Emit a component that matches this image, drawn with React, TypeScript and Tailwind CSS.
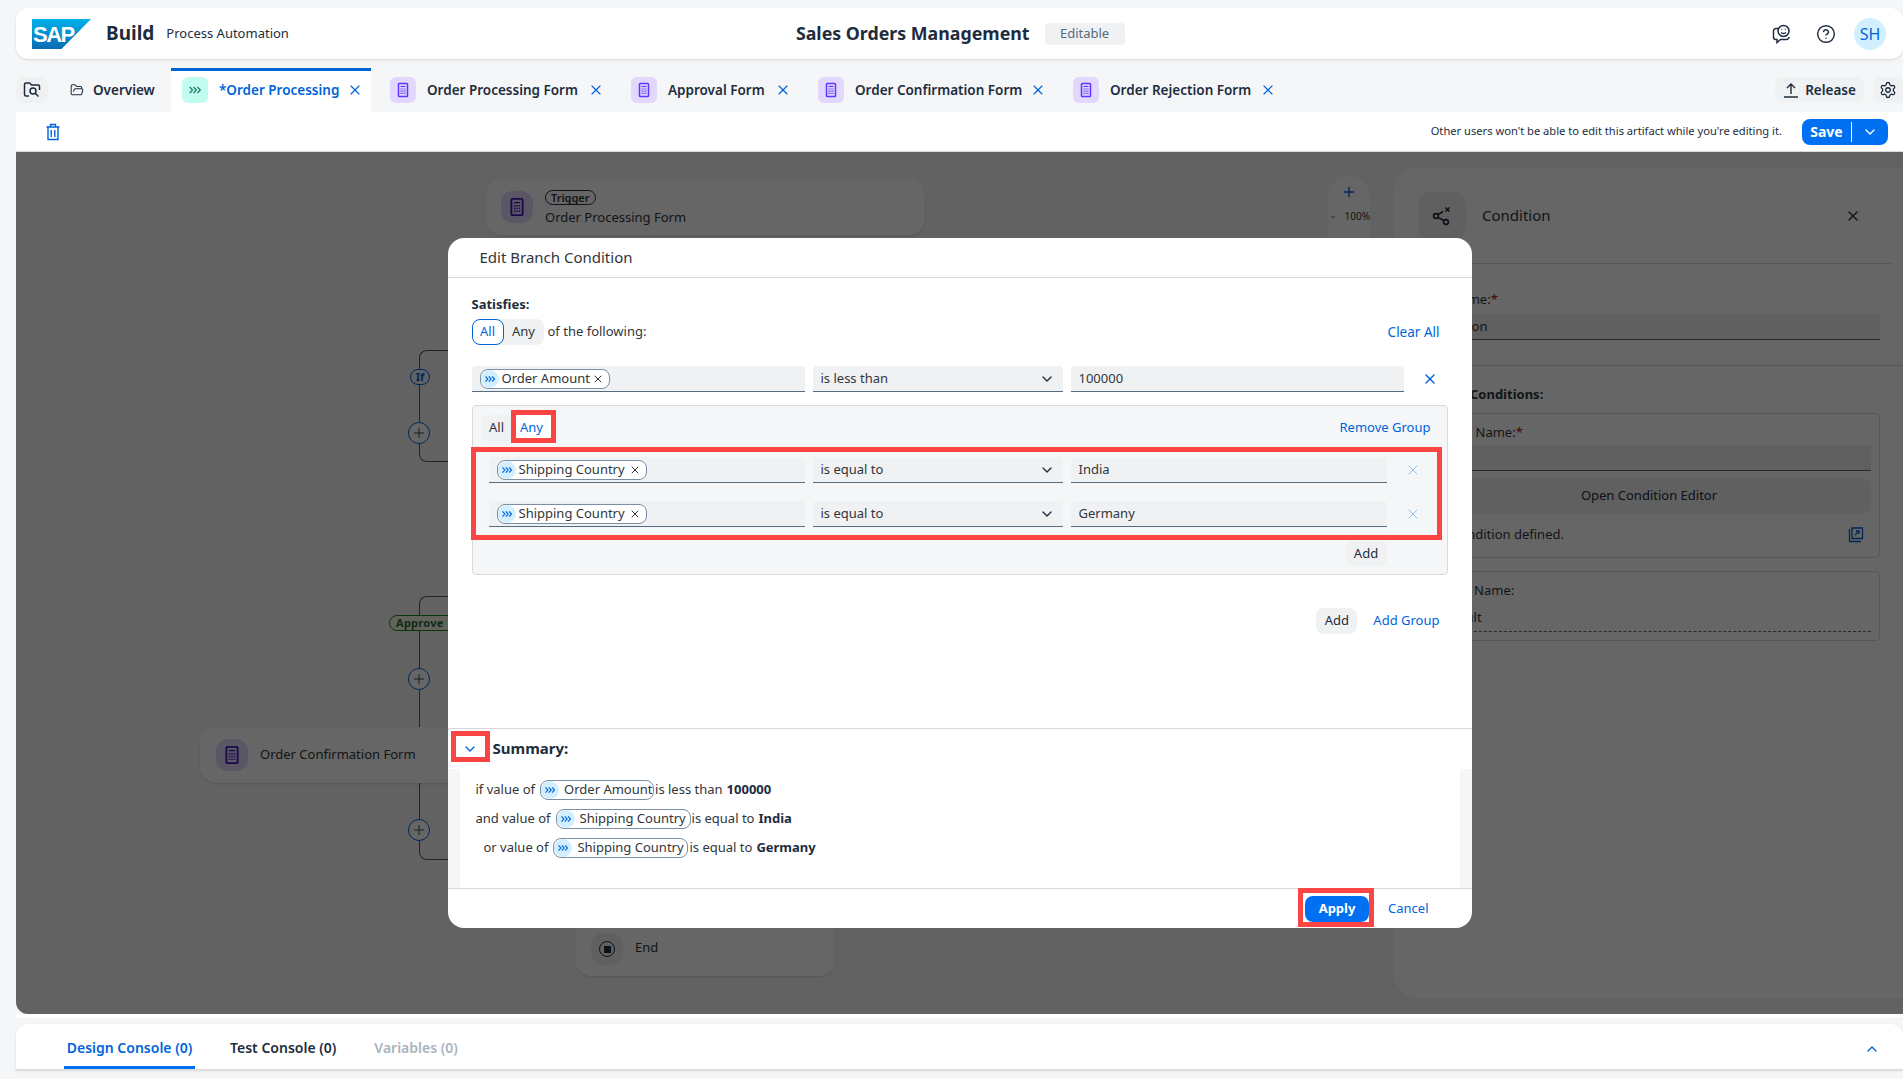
import { ChevronDown, ChevronUp, CircleHelp, FolderOpen, Plus, Settings, X } from "lucide-react";

function Chevrons({ className }: { className?: string }) {
  return (
    <svg viewBox="0 0 16 16" fill="none" stroke="currentColor" strokeWidth="1.5" className={className}>
      <path d="M2 4.5 5.2 8 2 11.5M6.4 4.5 9.6 8 6.4 11.5M10.8 4.5 14 8 10.8 11.5" />
    </svg>
  );
}

function FormIcon({ className }: { className?: string }) {
  return (
    <svg viewBox="0 0 16 16" fill="none" stroke="currentColor" className={className}>
      <rect x="3.5" y="1.5" width="9" height="13" rx="0.8" strokeWidth="1.5" />
      <path d="M5.5 4.5h5" strokeWidth="1.1" />
      <path d="M5.5 7h1.2M7.4 7h1.2M9.3 7h1.2M5.5 9.2h1.2M7.4 9.2h1.2M9.3 9.2h1.2M5.5 11.4h1.2M7.4 11.4h1.2M9.3 11.4h1.2" strokeWidth="1.2" />
    </svg>
  );
}

function SapLogo() {
  return (
    <svg viewBox="0 0 59 30" className="h-[30px] w-[59px]">
      <defs>
        <linearGradient id="sap" x1="0.5" y1="0" x2="0.5" y2="1">
          <stop offset="0" stopColor="#00b1eb" />
          <stop offset="1" stopColor="#0a6cb3" />
        </linearGradient>
      </defs>
      <polygon points="0,0 59,0 29.5,30 0,30" fill="url(#sap)" />
      <text x="1" y="23" fontFamily="Liberation Sans" fontWeight="700" fontSize="22" letterSpacing="-1.5" fill="#fff">
        SAP
      </text>
    </svg>
  );
}

function Tab({ name, width }: { name: string; width: string }) {
  return (
    <div className="flex items-center">
      <span className="flex h-[26px] w-[26px] items-center justify-center rounded-md bg-[#e2d8ff]">
        <FormIcon className="h-4 w-4 text-[#5d36ff]" />
      </span>
      <span className={`ml-[11px] whitespace-nowrap text-[13.5px] font-semibold text-[#1d2d3e] ${width}`}>{name}</span>
      <X className="ml-2 h-4 w-4 text-[#0064d9]" strokeWidth={1.75} />
    </div>
  );
}

function Chip({ label, width }: { label: string; width: string }) {
  return (
    <span className={`flex h-5 items-center rounded-lg border border-[#7b8ea3] bg-white text-[13px] text-[#32363a] ${width}`}>
      <span className="flex h-[18px] w-[18px] shrink-0 items-center justify-center rounded-full bg-[#d1efff]">
        <Chevrons className="h-3 w-3 text-[#0064d9]" />
      </span>
      <span className="ml-[3px] whitespace-nowrap">{label}</span>
      <X className="ml-auto mr-[5px] h-3 w-3 text-[#32363a]" />
    </span>
  );
}

function Field({ width, children }: { width: string; children?: React.ReactNode }) {
  return (
    <div className={`flex h-[26px] items-center rounded-t border-b border-[#556b82] bg-[#eff1f2] text-[13px] text-[#32363a] ${width}`}>
      {children}
    </div>
  );
}

function Select({ label }: { label: string }) {
  return (
    <Field width="w-[250px] px-[8px]">
      <span>{label}</span>
      <ChevronDown className="ml-auto h-4 w-4 text-[#1d2d3e]" />
    </Field>
  );
}

function Row({ chip, chipWidth, op, value, wide }: { chip: string; chipWidth: string; op: string; value: string; wide?: boolean }) {
  return (
    <div className="flex gap-2">
      <Field width={wide ? "w-[333px] pl-2" : "w-[316px] pl-2"}>
        <Chip label={chip} width={chipWidth} />
      </Field>
      <Select label={op} />
      <Field width={wide ? "w-[333px] pl-2" : "w-[316px] pl-2"}>{value}</Field>
    </div>
  );
}

function SummaryChip({ label, width }: { label: string; width: string }) {
  return (
    <span className={`mx-[1px] flex h-5 items-center rounded-lg border border-[#7b8ea3] ${width}`}>
      <span className="flex h-[18px] w-[18px] shrink-0 items-center justify-center rounded-full bg-[#d1efff]">
        <Chevrons className="h-3 w-3 text-[#0064d9]" />
      </span>
      <span className="ml-[5px] whitespace-nowrap">{label}</span>
    </span>
  );
}

function FlowPlus({ className }: { className: string }) {
  return (
    <span className={`absolute flex h-[22px] w-[22px] items-center justify-center rounded-full border border-[#0064d9] bg-white ${className}`}>
      <Plus className="h-4 w-4 text-[#1d2d3e]" strokeWidth={1.25} />
    </span>
  );
}

function Canvas() {
  return (
    <>
      {/* flow behind the dialog */}
      <div className="absolute left-[403px] top-[198px] h-[112px] w-[60px] rounded-l-lg border-y border-l border-[#475e75]" />
      <div className="absolute left-[403px] top-[444px] h-[264px] w-[60px] rounded-l-lg border-y border-l border-[#475e75]" />
      <span className="absolute left-[394px] top-[217px] flex h-4 w-5 items-center justify-center rounded-full border border-[#0064d9] bg-[#ebf5ff] text-[11px] font-bold text-[#0064d9]">
        If
      </span>
      <FlowPlus className="left-[392px] top-[270px]" />
      <span className="absolute left-[373px] top-[463px] flex h-4 w-[70px] items-center rounded-full border border-[#188918] bg-[#f5fae5] pl-[6px] text-[11px] font-bold tracking-wide text-[#256f3a]">
        Approve
      </span>
      <FlowPlus className="left-[392px] top-[516px]" />
      <FlowPlus className="left-[392px] top-[667px]" />

      <div className="absolute left-[469px] top-[27px] flex h-14 w-[440px] items-center gap-3 rounded-2xl bg-white pl-4 shadow-sm">
        <span className="flex h-8 w-8 items-center justify-center rounded-xl bg-[#e2d8ff]">
          <FormIcon className="h-5 w-5 text-[#3c1fb5]" />
        </span>
        <div className="text-[13px] text-[#32363a]">
          <div className="w-fit rounded-full border border-[#1d2d3e] px-[5px] text-[11px] font-semibold leading-[13px]">Trigger</div>
          <div className="mt-1 leading-4">Order Processing Form</div>
        </div>
      </div>
      <div className="absolute left-[184px] top-[575px] flex h-14 w-[440px] items-center gap-3 rounded-2xl bg-white pl-4 shadow-sm">
        <span className="flex h-8 w-8 items-center justify-center rounded-xl bg-[#e2d8ff]">
          <FormIcon className="h-5 w-5 text-[#3c1fb5]" />
        </span>
        <span className="text-[13px] text-[#32363a]">Order Confirmation Form</span>
      </div>
      <div className="absolute left-[559px] top-[760px] flex h-[64px] w-[260px] items-end gap-3 rounded-2xl bg-white pb-[11px] pl-4 shadow-sm">
        <span className="flex h-8 w-8 items-center justify-center rounded-xl bg-[#eff1f2]">
          <span className="flex h-4 w-4 items-center justify-center rounded-full border-[1.5px] border-[#1d2d3e]">
            <span className="h-[7px] w-[7px] bg-[#1d2d3e]" />
          </span>
        </span>
        <span className="pb-2 text-[13px] text-[#32363a]">End</span>
      </div>

      {/* zoom control */}
      <div className="absolute left-[1312px] top-[24px] h-[120px] w-[42px] rounded-full bg-white pt-2 text-center text-[#0064d9]">
        <Plus className="mx-auto h-4 w-4" />
        <div className="mt-[9px] flex items-center justify-between pl-[1px] text-[10px] text-[#32363a]">
          <ChevronDown className="h-2 w-2" />
          <span>100%</span>
        </div>
      </div>

      {/* properties panel */}
      <div className="absolute bottom-[16px] left-[1378px] right-0 top-[16px] rounded-l-3xl bg-white text-[13px] text-[#32363a]">
        <div className="mr-3 flex h-[96px] items-center border-b border-[#d9d9d9] pl-6">
          <span className="flex h-12 w-12 items-center justify-center rounded-xl bg-[#eff1f2]">
            <svg viewBox="0 0 20 20" fill="none" stroke="#1d2d3e" strokeWidth="1.6" className="h-5 w-5">
              <circle cx="4" cy="10" r="2.4" />
              <circle cx="14" cy="16" r="2.4" />
              <path d="M6 8.6 11 5.5M6 11.4l6 3.4M13.5 1.5l4 4M17.5 1.5l-4 4" />
            </svg>
          </span>
          <span className="ml-4 text-[15px]">Condition</span>
          <X className="ml-auto mr-[30px] h-4 w-4" />
        </div>
        <div className="h-[102px] border-b border-[#d9d9d9] pl-6 pr-[23px] pt-6">
          <div className="ml-[2px] leading-[22px]">
            Step Name:<span className="text-[#aa0808]">*</span>
          </div>
          <div className="mt-1 flex h-[26px] items-center border-b border-[#556b82] bg-[#eff1f2] pl-[10px]">Condition</div>
        </div>
        <div className="pl-4 pr-[23px]">
          <div className="ml-[11px] mt-[19px] font-bold">Branch Conditions:</div>
          <div className="mt-2 h-[145px] rounded border border-[#d9d9d9] px-2 pt-[9px]">
            <div className="ml-[10px]">
              Branch Name:<span className="text-[#aa0808]">*</span>
            </div>
            <div className="mt-[3px] h-[26px] border-b border-[#556b82] bg-[#eff1f2]" />
            <div className="mt-[7px] flex h-9 items-center justify-center rounded-lg bg-[#eff1f2] pl-2 text-[#1d2d3e]">Open Condition Editor</div>
            <div className="ml-[13px] mt-[11px] flex items-center">
              No condition defined.
              <svg viewBox="0 0 16 16" fill="none" stroke="#0064d9" strokeWidth="1.3" className="ml-auto mr-[7px] h-4 w-4">
                <path d="M1.5 2v12.5H13M4 1h10.5v10.5H4zM7 8l4-4M8 4h3v3" />
              </svg>
            </div>
          </div>
          <div className="mt-[13px] h-[70px] rounded border border-[#d9d9d9] px-2 pt-[9px]">
            <div className="ml-[7px]">Default Name:</div>
            <div className="mt-[5px] h-[27px] border-b border-dashed border-[#556b82] pl-[18px] leading-6">Default</div>
          </div>
        </div>
      </div>
    </>
  );
}

function Dialog() {
  return (
    <div className="relative flex h-[690px] w-[1024px] flex-col overflow-hidden rounded-2xl bg-white text-[13px] text-[#32363a]">
      <div className="flex h-10 shrink-0 items-center border-b border-[#d9d9d9] pl-8 text-[15px]">Edit Branch Condition</div>

      <div className="h-[450px] shrink-0 pl-6 pt-4">
        <div className="font-bold leading-5 text-[#1d2d3e]">Satisfies:</div>
        <div className="mt-[5px] flex h-[26px] w-[968px] items-center">
          <div className="flex h-[26px] rounded-lg bg-[#eff1f2]">
            <span className="flex w-[32px] items-center justify-center rounded-lg border border-[#0064d9] bg-white text-[#0064d9]">All</span>
            <span className="flex w-[40px] items-center justify-center">Any</span>
          </div>
          <span className="ml-1">of the following:</span>
          <span className="ml-auto text-[13.5px] text-[#0064d9]">Clear All</span>
        </div>

        <div className="mt-[21px] flex items-center">
          <Row wide chip="Order Amount" chipWidth="w-[130px]" op="is less than" value="100000" />
          <X className="ml-[18px] h-4 w-4 text-[#0064d9]" strokeWidth={2} />
        </div>

        <div className="mt-[13px] h-[170px] w-[976px] rounded border border-[#d9d9d9] bg-[#f5f6f7] pl-2 pt-[9px]">
          <div className="flex h-[26px] items-center">
            <div className="flex h-[26px] rounded-lg bg-[#eff1f2]">
              <span className="flex w-[32px] items-center justify-center">All</span>
              <span className="flex w-[38px] items-center justify-center rounded bg-white text-[#0064d9]">Any</span>
            </div>
            <span className="ml-auto mr-4 text-[#0064d9]">Remove Group</span>
          </div>
          <div className="ml-2 mt-4 flex items-center">
            <Row chip="Shipping Country" chipWidth="w-[150px]" op="is equal to" value="India" />
            <X className="ml-[18px] h-4 w-4 text-[#8fbcf0]" strokeWidth={1.5} />
          </div>
          <div className="ml-2 mt-[18px] flex items-center">
            <Row chip="Shipping Country" chipWidth="w-[150px]" op="is equal to" value="Germany" />
            <X className="ml-[18px] h-4 w-4 text-[#8fbcf0]" strokeWidth={1.5} />
          </div>
          <div className="mt-[14px] flex w-[906px] justify-end">
            <span className="flex h-[25px] w-[41px] items-center justify-center rounded-lg bg-[#eff1f2] text-[#1d2d3e]">Add</span>
          </div>
        </div>

        <div className="mt-[33px] flex w-[968px] items-center justify-end gap-4">
          <span className="flex h-[26px] w-[41px] items-center justify-center rounded-lg bg-[#eff1f2] text-[#1d2d3e]">Add</span>
          <span className="text-[#0064d9]">Add Group</span>
        </div>
      </div>

      <div className="flex h-[41px] shrink-0 items-center border-t border-[#d9d9d9]">
        <ChevronDown className="ml-[14px] h-4 w-4 text-[#0064d9]" />
        <span className="ml-[15px] pb-[2px] text-[15px] font-bold text-[#1d2d3e]">Summary:</span>
      </div>

      <div className="h-[119px] shrink-0 bg-[#f5f6f7] px-3">
        <div className="h-full bg-white pl-4 pt-[6px]">
          <div className="flex h-[29px] items-center">
            if value of <SummaryChip label="Order Amount" width="ml-[5px] w-[114px]" /> is less than <b className="ml-1 text-[#1d2d3e]">100000</b>
          </div>
          <div className="flex h-[29px] items-center">
            and value of <SummaryChip label="Shipping Country" width="ml-[5px] w-[135px]" /> is equal to <b className="ml-1 text-[#1d2d3e]">India</b>
          </div>
          <div className="flex h-[29px] items-center pl-2">
            or value of <SummaryChip label="Shipping Country" width="ml-[5px] w-[135px]" /> is equal to <b className="ml-1 text-[#1d2d3e]">Germany</b>
          </div>
        </div>
      </div>

      <div className="flex flex-1 items-center justify-end gap-[19px] border-t border-[#d9d9d9] pr-[43px]">
        <span className="flex h-[26px] w-16 items-center justify-center rounded-lg bg-[#0070f2] font-bold text-white">Apply</span>
        <span className="text-[#0064d9]">Cancel</span>
      </div>

      {/* red callouts from the tutorial */}
      <div className="absolute left-[63px] top-[172px] h-[33px] w-[45px] border-[5px] border-[#fb4444]" />
      <div className="absolute left-[23px] top-[209px] h-[93px] w-[971px] border-[5px] border-[#fb4444]" />
      <div className="absolute left-[3px] top-[493px] h-[31px] w-[39px] border-[5px] border-[#fb4444]" />
      <div className="absolute left-[850px] top-[650px] h-[39px] w-[76px] border-[5px] border-[#fb4444]" />
    </div>
  );
}

export default function App() {
  return (
    <div className="flex h-screen flex-col overflow-hidden bg-[#f5f6f7] pl-4 pt-2 font-['Noto_Sans',sans-serif] text-[#1d2d3e]">
      <header className="flex h-[51px] shrink-0 items-center rounded-l-xl rounded-r-xl bg-white shadow-sm">
        <div className="ml-4">
          <SapLogo />
        </div>
        <span className="ml-[15px] text-[19px] font-bold">Build</span>
        <span className="ml-3 text-[13px]">Process Automation</span>
        <div className="ml-[507px] text-[17.8px] font-bold">Sales Orders Management</div>
        <span className="ml-[15px] flex h-[22px] w-20 items-center justify-center rounded bg-[#eff1f2] text-[13px] text-[#556b82]">Editable</span>
        <div className="ml-auto flex items-center">
          <svg viewBox="0 0 20 20" fill="none" stroke="#1d2d3e" strokeWidth="1.5" className="h-5 w-5">
            <path d="M6 4.5H4a2.5 2.5 0 0 0-2.5 2.5v6A2.5 2.5 0 0 0 4 15.5h1v3l3.5-3h6a2.5 2.5 0 0 0 2.5-2.5" />
            <circle cx="11.5" cy="7" r="5.5" />
            <path d="M9 8.5c1.3 1.2 3.7 1.2 5 0" />
            <path d="M9.5 5.5h.8M12.8 5.5h.8" />
          </svg>
          <CircleHelp className="ml-6 h-5 w-5" strokeWidth={1.75} />
          <span className="ml-[18px] mr-[17px] flex h-8 w-8 items-center justify-center rounded-full bg-[#d1efff] text-base text-[#0064d9]">SH</span>
        </div>
      </header>

      <div className="mt-[9px] flex h-[44px] shrink-0 items-center">
        <span className="flex h-[26px] w-8 items-center justify-center rounded-lg bg-[#eff1f2]">
          <svg viewBox="0 0 18 18" fill="none" stroke="#1d2d3e" strokeWidth="1.5" className="h-[18px] w-[18px]">
            <path d="M6 15H3a1.5 1.5 0 0 1-1.5-1.5v-10A1.5 1.5 0 0 1 3 2h3.5l2 2H15a1.5 1.5 0 0 1 1.5 1.5V9" />
            <circle cx="10" cy="10" r="3" />
            <path d="m12.2 12.2 3.3 3.3" />
          </svg>
        </span>
        <FolderOpen className="ml-[22px] h-[14px] w-[14px]" strokeWidth={1.75} />
        <span className="ml-[9px] w-[62px] whitespace-nowrap text-[13.5px] font-semibold">Overview</span>
        <div className="ml-4 flex h-[44px] w-[200px] items-center border-t-[3px] border-[#0064d9] bg-white pb-[3px] pl-[11px]">
          <span className="flex h-[26px] w-[26px] items-center justify-center rounded-md bg-[#c2fcee]">
            <Chevrons className="h-[14px] w-[14px] text-[#1a7f6b]" />
          </span>
          <span className="ml-[11px] w-[120px] whitespace-nowrap text-[13.5px] font-semibold text-[#0064d9]">*Order Processing</span>
          <X className="ml-2 h-4 w-4 text-[#0064d9]" strokeWidth={1.75} />
        </div>
        <div className="ml-[19px] flex gap-[27px]">
          <Tab name="Order Processing Form" width="w-[153px]" />
          <Tab name="Approval Form" width="w-[99px]" />
          <Tab name="Order Confirmation Form" width="w-[167px]" />
          <Tab name="Order Rejection Form" width="w-[142px]" />
        </div>
        <span className="ml-auto flex h-[26px] w-[89px] items-center justify-center gap-[6px] rounded-lg bg-[#eff1f2] text-[13.5px] font-semibold">
          <svg viewBox="0 0 16 16" fill="none" stroke="#1d2d3e" strokeWidth="1.4" className="h-4 w-4">
            <path d="M8 12V2M4 6l4-4 4 4M1 15h14" />
          </svg>
          Release
        </span>
        <span className="ml-[9px] flex h-[26px] w-[30px] items-center justify-center rounded-l-lg bg-[#eff1f2]">
          <Settings className="h-[18px] w-[18px]" strokeWidth={1.75} />
        </span>
      </div>

      <div className="flex h-10 shrink-0 items-center border-b border-[#d9d9d9] bg-white pr-[15px]">
        <svg viewBox="0 0 16 18" fill="none" stroke="#0064d9" strokeWidth="1.4" className="ml-[29px] h-[18px] w-4">
          <path d="M1.5 4h13M5.5 4V1.5h5V4M3 4v12.5h10V4M6.2 7v7M9.8 7v7" />
        </svg>
        <span className="ml-auto text-[11.15px]">Other users won't be able to edit this artifact while you're editing it.</span>
        <span className="ml-5 flex h-[26px] w-[86px] items-center rounded-lg bg-[#0070f2] text-sm font-bold text-white">
          <span className="flex w-[50px] justify-center border-r border-white">Save</span>
          <ChevronDown className="ml-[10px] h-4 w-4" />
        </span>
      </div>

      <main className="relative h-[862px] shrink-0 overflow-hidden rounded-bl-xl bg-[#f5f6f7]">
        <Canvas />
        <div className="absolute inset-0 flex items-center justify-center bg-black/60">
          <Dialog />
        </div>
      </main>
      <div className="h-1 shrink-0 rounded-b-xl bg-white" />

      <footer className="mt-[6px] flex h-[46px] shrink-0 items-stretch rounded-t-xl border-b border-[#d9d9d9] bg-white pt-[2px] text-sm font-semibold shadow-sm">
        <span className="ml-12 flex w-[131px] items-center justify-center border-b-[3px] border-[#0070f2] pt-[3px] text-[#0064d9]">Design Console (0)</span>
        <span className="ml-[35px] flex items-center">Test Console (0)</span>
        <span className="ml-[38px] flex items-center text-[#a9b4be]">Variables (0)</span>
        <ChevronUp className="ml-auto mr-[23px] mt-[15px] h-4 w-4 text-[#0064d9]" />
      </footer>
    </div>
  );
}
